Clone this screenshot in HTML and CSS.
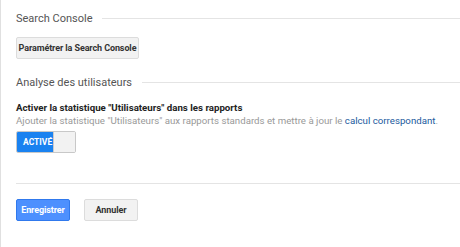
FILE: index.html
```html
<!DOCTYPE html>
<html lang="fr">
<head>
    <meta charset="UTF-8">
    <title>Paramètres de la propriété</title>
    <link rel="stylesheet" href="styles.css">
</head>
<body>
    <div class="settings">
        <div class="section-title">
            <span>Search Console</span>
        </div>
        <button class="plain-button setup-button">Paramétrer la Search Console</button>

        <div class="section-title users-title">
            <span>Analyse des utilisateurs</span>
        </div>
        <div class="option-label">Activer la statistique "Utilisateurs" dans les rapports</div>
        <div class="option-help">
            Ajouter la statistique "Utilisateurs" aux rapports standards et mettre à jour le
            <a href="#">calcul correspondant</a>.
        </div>
        <div class="toggle">
            <span class="toggle-on">ACTIVÉ</span>
            <span class="toggle-knob"></span>
        </div>

        <div class="form-actions">
            <button class="save-button">Enregistrer</button>
            <button class="plain-button cancel-button">Annuler</button>
        </div>
    </div>
</body>
</html>
```

FILE: styles.css
```css
body {
    margin: 0;
    font-family: Roboto, Arial, sans-serif;
    background-color: #fff;
    color: #333;
}

.settings {
    border-left: 1px solid #e0e0e0;
    min-height: 247px;
    box-sizing: border-box;
    padding: 9px 0 0 15px;
}

.section-title {
    display: flex;
    align-items: center;
    gap: 10px;
    font-size: 11px;
    color: #555;
    height: 18px;
}

.section-title::after {
    content: "";
    flex: 1;
    height: 1px;
    background-color: #e4e4e4;
}

.plain-button {
    font-family: Roboto, Arial, sans-serif;
    font-size: 9px;
    font-weight: bold;
    letter-spacing: -0.1px;
    color: #333;
    background-color: #f2f2f2;
    border: 1px solid #dcdcdc;
    border-radius: 2px;
    height: 22px;
    padding: 0;
    white-space: nowrap;
    cursor: pointer;
}

.setup-button {
    display: block;
    margin-top: 10px;
    width: 123px;
}

.users-title {
    margin-top: 14px;
}

.option-label {
    margin-top: 11px;
    font-size: 9.7px;
    font-weight: bold;
    color: #222;
}

.option-help {
    margin-top: 2px;
    font-size: 9.7px;
    color: #999;
    white-space: nowrap;
}

.option-help a {
    color: #1a5a9e;
    text-decoration: none;
}

.toggle {
    display: flex;
    width: 60px;
    height: 22px;
    margin-top: 5px;
    border: 1px solid #c8c8c8;
    border-radius: 2px;
    box-sizing: border-box;
    overflow: hidden;
}

.toggle-on {
    width: 36px;
    background-color: #1a82f0;
    color: #fff;
    font-family: Roboto, Arial, sans-serif;
    font-size: 8.5px;
    font-weight: bold;
    line-height: 20px;
    padding-left: 6px;
    box-sizing: border-box;
    white-space: nowrap;
    overflow: hidden;
}

.toggle-knob {
    flex: 1;
    background-color: #f2f2f2;
    border-left: 1px solid #ccc;
}

.form-actions {
    display: flex;
    gap: 14px;
    margin-top: 30px;
    padding-top: 15px;
    border-top: 1px solid #e4e4e4;
}

.save-button {
    font-family: Roboto, Arial, sans-serif;
    font-size: 9px;
    font-weight: bold;
    letter-spacing: -0.1px;
    color: #fff;
    background-color: #4d90fe;
    border: 1px solid #3079ed;
    border-radius: 2px;
    height: 22px;
    width: 54px;
    padding: 0;
    cursor: pointer;
}

.cancel-button {
    width: 54px;
}
```
